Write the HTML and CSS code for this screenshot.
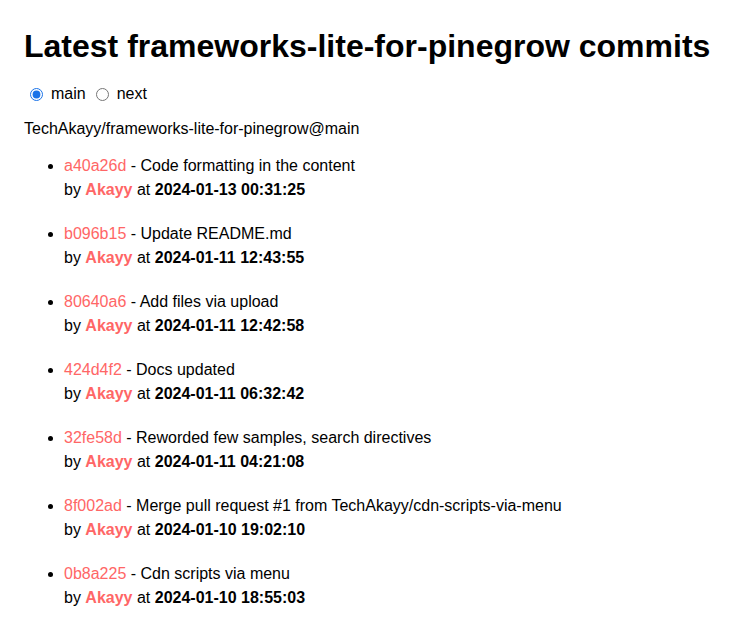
FILE: index.html
```html
<!DOCTYPE html>
<html>
<head>
<meta charset="utf-8">
<link rel="stylesheet" href="styles.css">
</head>
<body>
<div class="app">
  <h1 class="title">Latest frameworks-lite-for-pinegrow commits</h1>
  <div class="branches">
    <input type="radio" id="main" value="main" name="branch" checked>
    <label for="main">main</label>
    <input type="radio" id="next" value="next" name="branch">
    <label for="next">next</label>
  </div>
  <p class="repo">TechAkayy/frameworks-lite-for-pinegrow@main</p>
  <ul class="commits">
    <li><a href="#" class="commit">a40a26d</a> - <span class="message">Code formatting in the content</span><br>by <span class="author"><a href="#">Akayy</a></span> at <span class="date">2024-01-13 00:31:25</span></li>
    <li><a href="#" class="commit">b096b15</a> - <span class="message">Update README.md</span><br>by <span class="author"><a href="#">Akayy</a></span> at <span class="date">2024-01-11 12:43:55</span></li>
    <li><a href="#" class="commit">80640a6</a> - <span class="message">Add files via upload</span><br>by <span class="author"><a href="#">Akayy</a></span> at <span class="date">2024-01-11 12:42:58</span></li>
    <li><a href="#" class="commit">424d4f2</a> - <span class="message">Docs updated</span><br>by <span class="author"><a href="#">Akayy</a></span> at <span class="date">2024-01-11 06:32:42</span></li>
    <li><a href="#" class="commit">32fe58d</a> - <span class="message">Reworded few samples, search directives</span><br>by <span class="author"><a href="#">Akayy</a></span> at <span class="date">2024-01-11 04:21:08</span></li>
    <li><a href="#" class="commit">8f002ad</a> - <span class="message">Merge pull request #1 from TechAkayy/cdn-scripts-via-menu</span><br>by <span class="author"><a href="#">Akayy</a></span> at <span class="date">2024-01-10 19:02:10</span></li>
    <li><a href="#" class="commit">0b8a225</a> - <span class="message">Cdn scripts via menu</span><br>by <span class="author"><a href="#">Akayy</a></span> at <span class="date">2024-01-10 18:55:03</span></li>
  </ul>
</div>
</body>
</html>
```
FILE: styles.css
```css
html, body {
  margin: 0;
  padding: 0;
  background: #fff;
}
body {
  font-family: "Liberation Sans", Arial, sans-serif;
  font-size: 16px;
  color: #000;
}
.app {
  padding: 7px 24px;
}
.title {
  font-size: 32px;
  font-weight: bold;
  margin: 21px 0 20px;
}
.branches {
  display: flex;
  align-items: center;
}
.branches input {
  margin: 0 8px 0 6px;
  width: 13px;
  height: 13px;
  accent-color: #1a73e8;
}
.branches label {
  margin-right: 4px;
}
.repo {
  margin: 17px 0 16px;
}
.commits {
  margin: 16px 0;
  padding-left: 40px;
}
.commits li {
  line-height: 1.5em;
  margin-bottom: 20px;
}
a {
  text-decoration: none;
  color: #f66;
}
.author, .date {
  font-weight: bold;
}
```
